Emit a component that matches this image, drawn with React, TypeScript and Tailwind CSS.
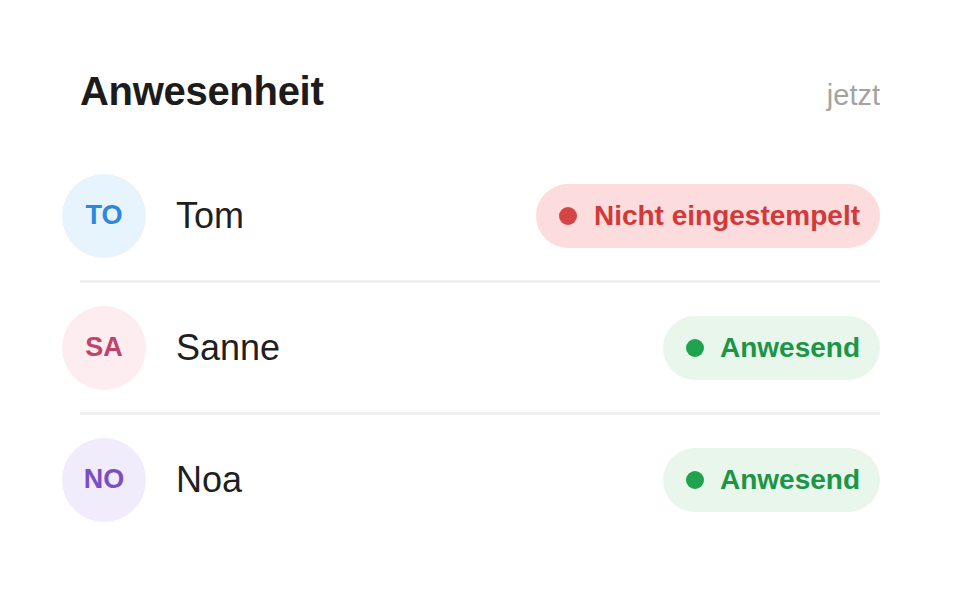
import React from "react";

type Status = "out" | "in";

interface Person {
  initials: string;
  name: string;
  status: Status;
  avatarBg: string;
  avatarText: string;
}

const people: Person[] = [
  { initials: "TO", name: "Tom", status: "out", avatarBg: "bg-[#e7f3fd]", avatarText: "text-[#2a88e0]" },
  { initials: "SA", name: "Sanne", status: "in", avatarBg: "bg-[#fdecf0]", avatarText: "text-[#c0436c]" },
  { initials: "NO", name: "Noa", status: "in", avatarBg: "bg-[#f1ecfb]", avatarText: "text-[#7a4fc2]" },
];

const StatusPill: React.FC<{ status: Status }> = ({ status }) => {
  if (status === "out") {
    return (
      <div className="flex h-[64px] items-center gap-[17px] rounded-full bg-[#fcdcdc] pl-[23px] pr-[20px]">
        <span className="h-[18px] w-[18px] rounded-full bg-[#d64545]" />
        <span className="text-[28px] font-bold text-[#d13a3a]">Nicht eingestempelt</span>
      </div>
    );
  }
  return (
    <div className="flex h-[64px] items-center gap-[16px] rounded-full bg-[#e8f6ec] pl-[23px] pr-[20px]">
      <span className="h-[18px] w-[18px] rounded-full bg-[#1fa34e]" />
      <span className="text-[28px] font-bold text-[#1c9547]">Anwesend</span>
    </div>
  );
};

export default function App() {
  return (
    <div
      className="h-[592px] w-[960px] bg-white px-[80px] pt-[67px]"
      style={{ fontFamily: '"Liberation Sans", Arial, sans-serif' }}
    >
      {/* Header */}
      <div className="flex items-baseline justify-between">
        <h1 className="text-[40px] font-bold leading-[48px] tracking-[-0.3px] text-[#1c1c1c]">Anwesenheit</h1>
        <span className="text-[29px] text-[#a3a3a3]">jetzt</span>
      </div>

      {/* Rows */}
      <div className="mt-[33px]">
        {people.map((p, i) => (
          <div key={p.initials}>
            {i > 0 && <div className="h-[3px] bg-[#f0f0f0]" />}
            <div className="flex items-center pt-[23px] pb-[22px]">
              <div
                className={`-ml-[18px] flex h-[84px] w-[84px] items-center justify-center rounded-full ${p.avatarBg}`}
              >
                <span className={`text-[27px] font-bold ${p.avatarText}`}>{p.initials}</span>
              </div>
              <span className="ml-[30px] flex-1 text-[36px] text-[#1f1f1f]">{p.name}</span>
              <StatusPill status={p.status} />
            </div>
          </div>
        ))}
      </div>
    </div>
  );
}
